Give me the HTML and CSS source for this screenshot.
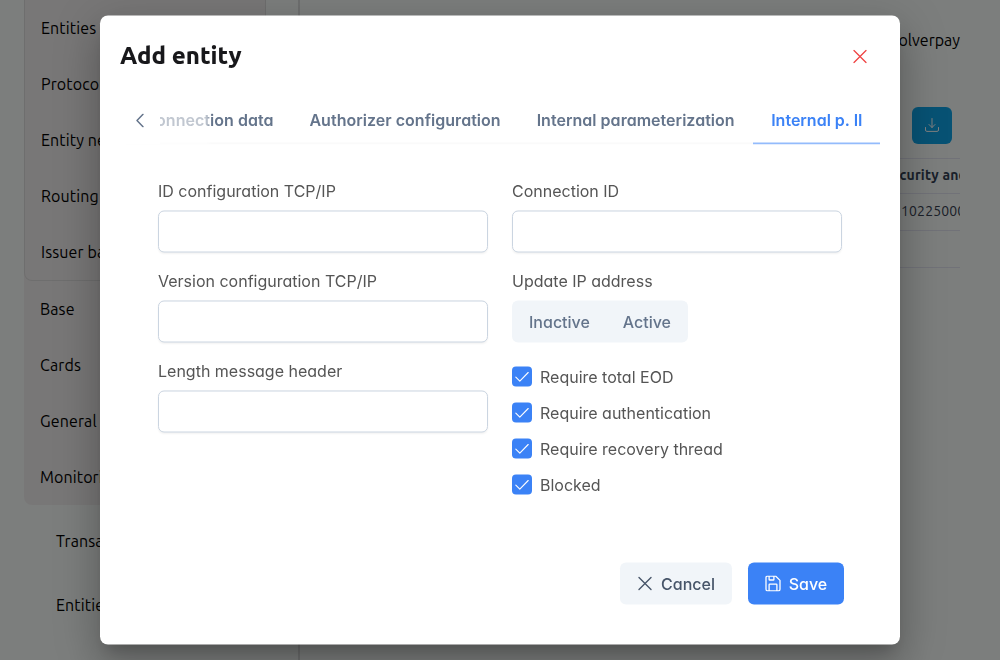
FILE: index.html
```html
<!DOCTYPE html>
<html lang="en">
<head>
<meta charset="utf-8">
<title>Add entity</title>
<link rel="stylesheet" href="styles.css">
</head>
<body>
<div class="app">
  <aside class="sidebar">
    <nav class="menu">
      <div class="submenu">
        <a class="item">Entities</a>
        <a class="item">Protocols</a>
        <a class="item">Entity network</a>
        <a class="item">Routing</a>
        <a class="item">Issuer base</a>
      </div>
      <a class="item">Base</a>
      <a class="item">Cards</a>
      <a class="item">General</a>
      <a class="item">Monitoring</a>
    </nav>
    <nav class="links">
      <a class="link">Transactions</a>
      <a class="link">Entities</a>
    </nav>
  </aside>
  <main class="main">
    <header class="user">Solverpay</header>
    <div class="toolbar">
      <button class="download"><svg width="14" height="14" viewBox="0 0 14 14" fill="none" stroke="currentColor" stroke-linecap="round" stroke-linejoin="round"><path d="M7 .5v9M4 6.5l3 3 3-3M.5 9.500v2.500a1.400 1.400 0 0 0 1.400 1.400h10.200a1.400 1.400 0 0 0 1.400-1.400V9.500"/></svg></button>
    </div>
    <div class="table">
      <div class="row head"><span>Security and</span></div>
      <div class="row value"><span>102250001</span></div>
      <div class="row"></div>
    </div>
  </main>
</div>

<div class="mask">
  <section class="dialog">
    <header class="dialog-head">
      <h1 class="title">Add entity</h1>
      <button class="close"><svg width="14" height="14" viewBox="0 0 14 14" fill="none" stroke="currentColor" stroke-width="1.3" stroke-linecap="round"><path d="M1 1l12 12M13 1L1 13"/></svg></button>
    </header>
    <div class="tabs">
      <div class="tab-track">
        <span class="tab">Connection data</span>
        <span class="tab">Authorizer configuration</span>
        <span class="tab">Internal parameterization</span>
        <span class="tab active">Internal p. II</span>
      </div>
      <button class="prev"><svg width="14" height="14" viewBox="0 0 14 14" fill="none" stroke="currentColor" stroke-width="1.5" stroke-linecap="round" stroke-linejoin="round"><path d="M10 .8L4 7l6 6.2"/></svg></button>
    </div>
    <div class="form">
      <div class="col">
        <label class="field"><span class="label">ID configuration TCP/IP</span><input class="input"></label>
        <label class="field"><span class="label">Version configuration TCP/IP</span><input class="input"></label>
        <label class="field"><span class="label">Length message header</span><input class="input"></label>
      </div>
      <div class="col">
        <label class="field"><span class="label">Connection ID</span><input class="input"></label>
        <div class="field"><span class="label">Update IP address</span>
          <div class="switch"><span>Inactive</span><span>Active</span></div>
        </div>
        <div class="checks">
          <div class="check"><span class="box"><svg width="14" height="14" viewBox="0 0 14 14" fill="none" stroke="currentColor" stroke-width="1.1" stroke-linecap="round" stroke-linejoin="round"><path d="M.8 7.6l4 4L13.2 3"/></svg></span>Require total EOD</div>
          <div class="check"><span class="box"><svg width="14" height="14" viewBox="0 0 14 14" fill="none" stroke="currentColor" stroke-width="1.1" stroke-linecap="round" stroke-linejoin="round"><path d="M.8 7.6l4 4L13.2 3"/></svg></span>Require authentication</div>
          <div class="check"><span class="box"><svg width="14" height="14" viewBox="0 0 14 14" fill="none" stroke="currentColor" stroke-width="1.1" stroke-linecap="round" stroke-linejoin="round"><path d="M.8 7.6l4 4L13.2 3"/></svg></span>Require recovery thread</div>
          <div class="check"><span class="box"><svg width="14" height="14" viewBox="0 0 14 14" fill="none" stroke="currentColor" stroke-width="1.1" stroke-linecap="round" stroke-linejoin="round"><path d="M.8 7.6l4 4L13.2 3"/></svg></span>Blocked</div>
        </div>
      </div>
    </div>
    <footer class="actions">
      <button class="btn cancel"><svg width="16" height="16" viewBox="0 0 16 16" fill="none" stroke="currentColor" stroke-width="1.4" stroke-linecap="round"><path d="M2 2l12 12M14 2L2 14"/></svg>Cancel</button>
      <button class="btn save"><svg width="16" height="16" viewBox="0 0 16 16" fill="none" stroke="currentColor" stroke-width="1.3" stroke-linejoin="round"><path d="M2.3.7h8.5L15 4.9v8.8a1.6 1.6 0 0 1-1.6 1.6H2.6A1.6 1.6 0 0 1 1 13.7V2A1.3 1.3 0 0 1 2.3.7zM4.1 15.2V9.3a.6.6 0 0 1 .6-.6h6.6a.6.6 0 0 1 .6.6v5.9M4.1.8v3.1a.6.6 0 0 0 .6.6h3.6a.6.6 0 0 0 .6-.6V.8"/></svg>Save</button>
    </footer>
  </section>
</div>
</body>
</html>
```
FILE: styles.css
```css
* { box-sizing: border-box; }
body {
  margin: 0;
  height: 660px;
  overflow: hidden;
  font: 16px/24px "Ubuntu", "Noto Sans", sans-serif;
  background: #f8fcfa;
  color: #000;
}
button { border: 0; padding: 0; background: none; font: inherit; }
svg { display: block; flex: none; }
.app { display: flex; height: 660px; white-space: nowrap; overflow: hidden; }
.sidebar { width: 300px; flex: none; padding: 0 32px 0 24px; border-right: 2px solid #dcdfde; letter-spacing: .12px; }
.menu { height: 505px; background: #f1efef; border-radius: 0 0 8px 8px; }
.submenu { height: 281px; border: 1px solid #dddcdc; border-top: 0; border-radius: 0 0 8px 8px; }
.item { display: flex; align-items: center; height: 56px; padding-left: 16px; }
.links { padding: 4px 0 0 32px; }
.link { display: flex; align-items: center; height: 64px; }
.main { flex: 1; min-width: 0; padding: 0 40px 0 24px; }
.user { padding-top: 28px; text-align: right; }
.toolbar { display: flex; justify-content: flex-end; padding: 55px 8px 14px 0; }
.download { display: flex; align-items: center; justify-content: center; width: 40px; height: 37px; padding-bottom: 1px; border-radius: 6px; background: #0ea5e9; color: #fff; }
.table { overflow: hidden; border-top: 1px solid #e2e4f0; }
.row { height: 37px; border-bottom: 1px solid #e2e4f0; overflow: hidden; font-size: 14px; line-height: 34px; color: #374151; }
.head { height: 35px; line-height: 32px; font-weight: 600; color: #334155; padding-left: 559px; letter-spacing: .2px; }
.value { padding-left: 577px; letter-spacing: .15px; }

.mask { position: fixed; inset: 0; display: flex; align-items: flex-start; justify-content: center; padding-top: 16px; background: rgba(0, 0, 0, .5); }
.dialog {
  display: flex;
  flex-direction: column;
  width: 800px;
  height: 629px;
  border-radius: 8px;
  background: #fff;
  color: #555;
  font-family: "Inter", sans-serif;
  font-feature-settings: "cv02", "cv03", "cv04", "cv11";
  white-space: nowrap;
  transform: translateY(-.5px);
  will-change: transform;
  box-shadow: 0 11px 15px -7px rgba(0, 0, 0, .2), 0 24px 38px 3px rgba(0, 0, 0, .14), 0 9px 46px 8px rgba(0, 0, 0, .12);
}
.dialog-head { display: flex; align-items: center; justify-content: space-between; height: 80px; padding: 0 33px 0 20px; }
.title { margin: 0; font: 800 24px/32px "Ubuntu", "Noto Sans", sans-serif; color: #18181b; }
.close { padding-top: 1px; color: #ef4444; }
.tabs { position: relative; display: flex; justify-content: flex-end; height: 49px; margin: 0 20px; overflow: hidden; }
.tab-track { display: flex; flex: none; }
.tab { padding: 12px 18px 11px; border-bottom: 2px solid #fafafa; font-weight: 600; letter-spacing: .03px; color: #64748b; }
.tab.active { padding: 12px 17.5px 11px 18.5px; color: #3b82f6; border-bottom-color: #93bbfc; letter-spacing: 0; }
.prev { position: absolute; left: 0; top: 0; display: flex; align-items: center; width: 92px; height: 49px; padding-left: 13px; color: #64748b; background: linear-gradient(90deg, #fff 40px, rgba(255, 255, 255, .6) 40px, rgba(255, 255, 255, .6) 86px, rgba(255, 255, 255, 0)); }
.form { display: grid; grid-template-columns: 330px 330px; gap: 24px; padding: 34px 58px 0; }
.col { display: flex; flex-direction: column; gap: 16px; }
.field { display: flex; flex-direction: column; gap: 8px; height: 74px; }
.label { line-height: 24px; }
.input { width: 100%; height: 42px; border: 1px solid #cbd5e1; border-radius: 6px; background: #fff; outline: none; box-shadow: 0 1px 2px rgba(18, 18, 23, .05); }
.switch { display: flex; width: 176px; height: 42px; border-radius: 6px; background: #f1f5f9; align-items: center; padding: 0 17px; justify-content: space-between; font-weight: 500; color: #64748b; }
.checks { display: flex; flex-direction: column; gap: 12px; padding-top: 6px; }
.check { display: flex; align-items: center; gap: 8px; height: 24px; }
.box { display: flex; align-items: center; justify-content: center; width: 20px; height: 20px; border-radius: 4px; background: #3b82f6; color: #fff; }
.actions { display: flex; justify-content: flex-end; gap: 16px; margin-top: auto; padding: 0 56px 40px 0; }
.btn { display: flex; align-items: center; justify-content: center; gap: 8px; height: 42px; border-radius: 6px; font-weight: 500; }
.cancel { width: 112px; background: #f1f5f9; color: #475569; }
.save { width: 96px; background: #3b82f6; color: #fff; }
```
